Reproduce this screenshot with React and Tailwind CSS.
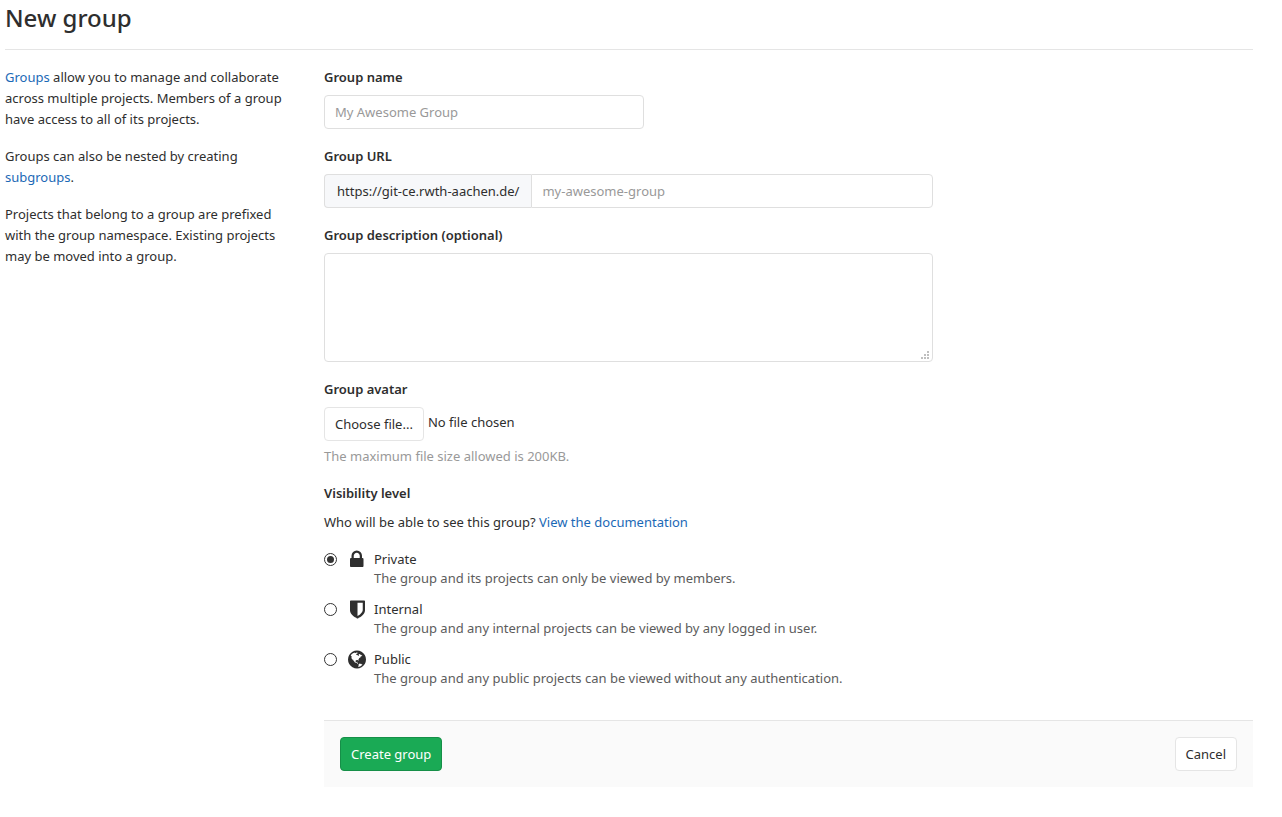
import { useRef, useState } from "react";

const link = "text-[#1b69b6] hover:underline";
const label = "mb-[7px] block font-semibold";
const field =
  "h-[34px] rounded border border-[#dfdfdf] bg-white px-2.5 placeholder:text-[#999999] focus:outline-none focus:border-[#73afea]";
const button = "h-[34px] rounded border px-2.5";

function LockIcon() {
  return (
    <svg viewBox="0 0 1152 1792" className="h-[21px]" fill="#2e2e2e" aria-hidden="true">
      <path d="M320 768h512v-192q0-106-75-181t-181-75-181 75-75 181v192zm832 96v576q0 40-28 68t-68 28h-960q-40 0-68-28t-28-68v-576q0-40 28-68t68-28h32v-192q0-184 132-316t316-132 316 132 132 316v192h32q40 0 68 28t28 68z" />
    </svg>
  );
}

function ShieldIcon() {
  return (
    <svg viewBox="0 0 1280 1792" className="h-[21px]" fill="#2e2e2e" aria-hidden="true">
      <path d="M1088 960v-640h-448v1137q119-63 213-137 235-184 235-360zm192-768v768q0 86-33.5 170.500t-83 150-118 127.500-126.500 103-121 77.500-89.500 49.500-42.500 20q-12 6-26 6t-26-6q-16-7-42.500-20t-89.500-49.500-121-77.500-126.500-103-118-127.500-83-150-33.500-170.500v-768q0-26 19-45t45-19h1152q26 0 45 19t19 45z" />
    </svg>
  );
}

function GlobeIcon() {
  return (
    <svg viewBox="0 0 1536 1792" className="h-[21px]" fill="#2e2e2e" aria-hidden="true">
      <path d="M768 128q209 0 385.500 103t279.500 279.500 103 385.500-103 385.500-279.500 279.500-385.500 103-385.500-103-279.500-279.500-103-385.500 103-385.500 279.500-279.500 385.500-103zm274 521q-2 1-9.500 9.500t-13.500 9.500q2 0 4.500-5t5-11 3.500-7q6-7 22-15 14-6 52-12 34-8 51 11-2-2 9.500-13t14.500-12q3-2 15-4.500t15-7.500l2-22q-12 1-17.500-7t-6.500-21q0 2-6 8 0-7-4.500-8t-11.500 1-9 1q-10-3-15-7.500t-8-16.500-4-15q-2-5-9.500-11t-9.500-10q-1-2-2.500-5.500t-3-6.500-4-5.500-5.500-2.500-7 5-7.500 10-4.500 5q-3-2-6-1.500t-4.500 1-4.500 3-5 3.500q-3 2-8.500 3t-8.500 2q15-5-1-11-10-4-16-3 9-4 7.500-12t-8.500-14h5q-1-4-8.500-8.500t-17.500-8.500-13-6q-8-5-34-9.500t-33-.5q-5 6-4.500 10.500t4 14 3.500 12.500q1 6-5.500 13t-6.500 12q0 7 14 15.500t10 21.500q-3 8-16 16t-16 12q-5 8-1.500 18.500t10.500 16.500q2 2 1.500 4t-3.500 4.500-5.500 4-6.500 3.500l-3 2q-11 5-20.500-6t-13.500-26q-7-25-16-30-23-8-29 1-5-13-41-26-25-9-58-4 6-1 0-15-7-15-19-12 3-6 4-17.500t1-13.500q3-13 12-23 1-1 7-8.500t9.500-13.500.5-6q35 4 50-11 5-5 11.500-17t10.500-17q9-6 14-5.500t14.500 5.500 14.500 5q14 1 15.500-11t-7.500-20q12 1 3-17-4-7-8-9-12-4-27 5-8 4 2 8-1-1-9.500 10.500t-16.500 17.500-16-5q-1-1-5.500-13.500t-9.500-13.500q-8 0-16 15 3-8-11-15t-24-8q19-12-8-27-7-4-20.500-5t-19.500 4q-5 7-5.500 11.500t5 8 10.500 5.500 11.500 4 8.500 3q14 10 8 14-2 1-8.500 3.500t-11.500 4.500-6 4q-3 4 0 14t-2 14q-5-5-9-17.500t-7-16.500q7 9-25 6l-10-1q-4 0-16 2t-20.500 1-13.500-8q-4-8 0-20 1-4 4-2-4-3-11-9.500t-10-8.500q-46 15-94 41 6 1 12-1 5-2 13-6.500t10-5.500q34-14 42-7l5-5q14 16 20 25-7-4-30-1-20 6-22 12 7 12 5 18-4-3-11.500-10t-14.500-11-15-5q-16 0-22 1-146 80-235 222 7 7 12 8 4 1 5 9t2.500 11 11.500-3q9 8 3 19 1-1 44 27 19 17 21 21 3 11-10 18-1-2-9-9t-9-4q-3 5 .5 18.500t10.500 12.500q-7 0-9.500 16t-2.500 35.500-1 23.500l2 1q-3 12 5.500 34.500t21.500 19.500q-13 3 20 43 6 8 8 9 3 2 12 7.500t15 10 10 10.500q4 5 10 22.500t14 23.500q-2 6 9.500 20t10.500 23q-1 0-2.500 1t-2.500 1q3 7 15.500 14t15.500 13q1 3 2 10t3 11 8 2q2-20-24-62-15-25-17-29-3-5-5.500-15.500t-4.500-14.500q2 0 6 1.500t8.500 3.500 7.500 4 2 3q-3 7 2 17.500t12 18.500 17 19 12 13q6 6 14 19.500t0 13.500q9 0 20 10t17 20q5 8 8 26t5 24q2 7 8.500 13.500t12.500 9.500l16 8 13 7q5 2 18.500 10.500t21.500 11.500q10 4 16 4t14.500-2.500 13.500-3.500q15-2 29 15t21 21q36 19 55 11-2 1 .5 7.500t8 15.500 9 14.500 5.500 8.500q5 6 18 15t18 15q6-4 7-9-3 8 7 20t18 10q14-3 14-32-31 15-49-18 0-1-2.500-5.500t-4-8.500-2.500-8.500 0-7.500 5-3q9 0 10-3.500t-2-12.500-4-13q-1-8-11-20t-12-15q-5 9-16 8t-16-9q0 1-1.500 5.500t-1.500 6.500q-13 0-15-1 1-3 2.500-17.500t3.500-22.500q1-4 5.500-12t7.500-14.500 4-12.500-4.500-9.500-17.500-2.500q-19 1-26 20-1 3-3 10.500t-5 11.500-9 7q-7 3-24 2t-24-5q-13-8-22.500-29t-9.500-37q0-10 2.500-26.500t3-25-5.500-24.500q3-2 9-9.500t10-10.500q2-1 4.500-1.500t4.500 0 4-1.500 3-6q-1-1-4-3-3-3-4-3 7 3 28.500-1.500t27.500 1.500q15 11 22-2 0-1-2.500-9.500t-.5-13.500q5 27 29 9 3 3 15.500 5t17.500 5q3 2 7 5.500t5.500 4.500 5-.5 8.500-6.500q10 14 12 24 11 40 19 44 7 3 11 2t4.500-9.500 0-14-1.500-12.500l-1-8v-18l-1-8q-15-3-18.500-12t1.500-18.500 15-18.500q1-1 8-3.500t15.500-6.500 12.500-8q21-19 15-35 7 0 11-9-1 0-5-3t-7.500-5-4.500-2q9-5 2-16 5-3 7.500-11t7.500-10q9 12 21 2 8-8 1-16 5-7 20.500-10.500t18.500-9.500q7 2 8-2t1-12 3-12q4-5 15-9t13-5l17-11q3-4 0-4 18 2 31-11 10-11-6-20 3-6-3-9.500t-15-5.500q3-1 11.500-.5t10.500-1.500q15-10-7-16-17-5-43 12zm-163 877q206-36 351-189-3-3-12.500-4.500t-12.500-3.500q-18-7-24-8 1-7-2.500-13t-8-9-12.500-8-11-7q-2-2-7-6t-7-5.500-7.500-4.500-8.500-2-10 1l-3 1q-3 1-5.500 2.500t-5.500 3-4 3 0 2.500q-21-17-36-22-5-1-11-5.500t-10.500-7-10-1.500-11.500 7q-5 5-6 15t-2 13q-7-5 0-17.500t2-18.500q-3-6-10.500-4.500t-12 4.500-11.500 8.500-9 6.500-8.500 5.500-8.500 7.500q-3 4-6 12t-5 11q-2-4-11.500-6.500t-9.500-5.500q2 10 4 35t5 38q7 31-12 48-27 25-29 40-4 22 12 26 0 7-8 20.500t-7 21.500q0 6 2 16z" />
    </svg>
  );
}

const levels = [
  { id: "private", name: "Private", Icon: LockIcon, text: "The group and its projects can only be viewed by members." },
  { id: "internal", name: "Internal", Icon: ShieldIcon, text: "The group and any internal projects can be viewed by any logged in user." },
  { id: "public", name: "Public", Icon: GlobeIcon, text: "The group and any public projects can be viewed without any authentication." },
];

export default function App() {
  const [level, setLevel] = useState("private");
  const [fileName, setFileName] = useState("");
  const fileInput = useRef(null);

  return (
    <div className="bg-white pr-[29px] pb-8 pl-[5px] font-['Noto_Sans',sans-serif] text-[13px] leading-[21px] text-[#2e2e2e]">
      <h1 className="border-b border-[#e5e5e5] pt-[3px] pb-4 text-2xl leading-[30px] font-medium">New group</h1>

      <div className="-mr-[13px] -ml-[15px] flex pt-[17px]">
        <aside className="w-1/4 space-y-4 px-[15px]">
          <p>
            <a href="#groups" className={link}>Groups</a> allow you to manage and collaborate across multiple projects.
            Members of a group have access to all of its projects.
          </p>
          <p>
            Groups can also be nested by creating <a href="#subgroups" className={link}>subgroups</a>.
          </p>
          <p>
            Projects that belong to a group are prefixed with the group namespace. Existing projects may be moved into
            a group.
          </p>
        </aside>

        <form className="w-3/4 pr-[13px] pl-[15px]" onSubmit={(e) => e.preventDefault()}>
          <div className="-mx-[15px]">
            <div className="w-2/3 space-y-[17px] px-[15px]">
              <div>
                <label htmlFor="group-name" className={label}>Group name</label>
                <input id="group-name" type="text" placeholder="My Awesome Group" className={`${field} block w-full max-w-80`} />
              </div>

              <div>
                <label htmlFor="group-url" className={label}>Group URL</label>
                <div className="flex">
                  <span className="flex h-[34px] items-center rounded-l border border-r-0 border-[#dfdfdf] bg-[#f7f8fa] px-3">
                    https://git-ce.rwth-aachen.de/
                  </span>
                  <input id="group-url" type="text" placeholder="my-awesome-group" className={`${field} min-w-0 flex-1 rounded-l-none`} />
                </div>
              </div>

              <div>
                <label htmlFor="group-description" className={label}>Group description (optional)</label>
                <div className="relative">
                  <textarea
                    id="group-description"
                    className="block h-[109px] w-full resize-y rounded border border-[#dfdfdf] px-2.5 py-1.5 focus:border-[#73afea] focus:outline-none [&::-webkit-resizer]:bg-transparent"
                  />
                  <svg
                    viewBox="0 0 8 8"
                    className="pointer-events-none absolute right-1 bottom-[3px] size-2"
                    fill="#bfbfbf"
                    aria-hidden="true"
                  >
                    <path d="M6 0h2v2h-2zM3 3h2v2h-2zM6 3h2v2h-2zM0 6h2v2h-2zM3 6h2v2h-2zM6 6h2v2h-2z" />
                  </svg>
                </div>
              </div>

              <div>
                <label htmlFor="group-avatar" className={label}>Group avatar</label>
                <div className="flex gap-1">
                  <button
                    type="button"
                    onClick={() => fileInput.current.click()}
                    className={`${button} border-[#e5e5e5] bg-white`}
                  >
                    Choose file...
                  </button>
                  <span className="pt-[5px]">{fileName || "No file chosen"}</span>
                </div>
                <input
                  id="group-avatar"
                  ref={fileInput}
                  type="file"
                  accept="image/*"
                  className="hidden"
                  onChange={(e) => setFileName(e.target.files[0]?.name ?? "")}
                />
                <p className="mt-[5px] text-[#999999]">The maximum file size allowed is 200KB.</p>
              </div>
            </div>
          </div>

          <fieldset className="mt-4">
            <legend className="mb-2 font-semibold">Visibility level</legend>
            <p>
              Who will be able to see this group?{" "}
              <a href="#documentation" className={link}>View the documentation</a>
            </p>
            <div className="mt-[17px] space-y-3">
              {levels.map(({ id, name, Icon, text }) => (
                <label key={id} htmlFor={id} className="flex">
                  <input
                    id={id}
                    type="radio"
                    name="visibility"
                    checked={level === id}
                    onChange={() => setLevel(id)}
                    className="mt-[3px] size-[13px] shrink-0 appearance-none rounded-full border border-[#333333] bg-white p-[2px] checked:bg-[#333333] checked:bg-clip-content"
                  />
                  <span className="ml-2.5 flex h-[19px] w-5 shrink-0 items-center justify-center">
                    <Icon />
                  </span>
                  <span className="ml-[7px] leading-[19px]">
                    <span className="block">{name}</span>
                    <span className="block text-[#5c5c5c]">{text}</span>
                  </span>
                </label>
              ))}
            </div>
          </fieldset>

          <div className="mt-8 flex justify-between border-t border-[#e5e5e5] bg-[#fafafa] p-4">
            <button type="submit" className={`${button} border-[#168f48] bg-[#1aaa55] text-white`}>Create group</button>
            <button type="button" className={`${button} border-[#e5e5e5] bg-white`}>Cancel</button>
          </div>
        </form>
      </div>
    </div>
  );
}
